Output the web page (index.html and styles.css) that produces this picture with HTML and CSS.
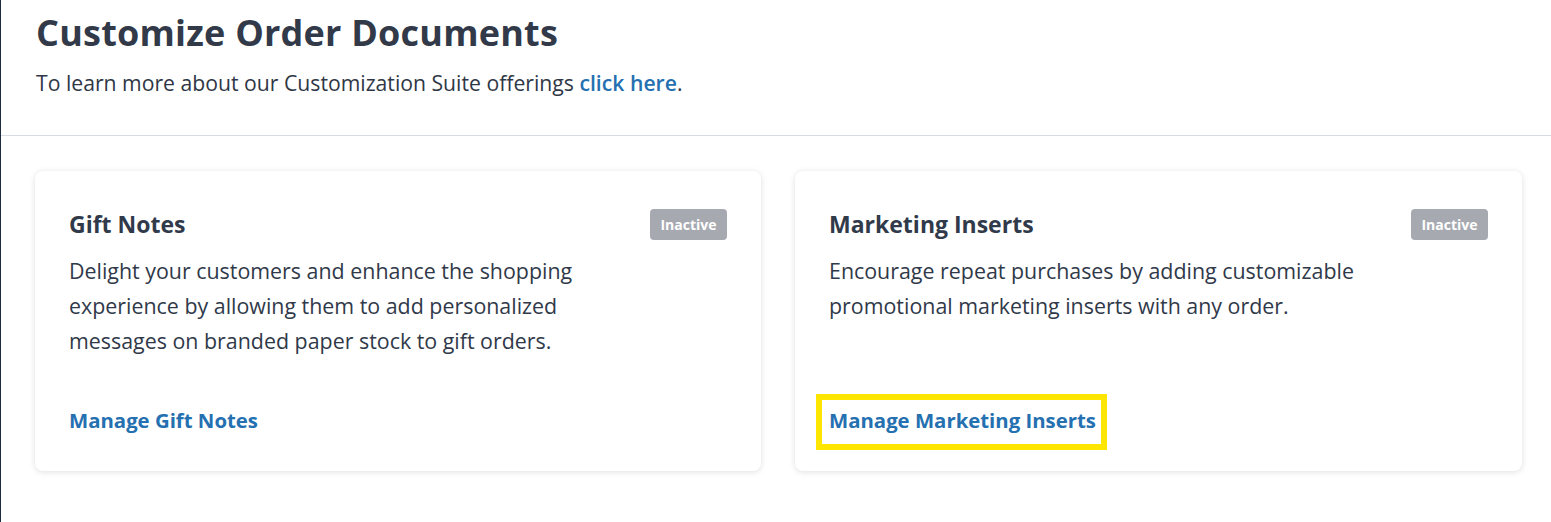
FILE: index.html
```html
<!DOCTYPE html>
<html lang="en">
<head>
<meta charset="utf-8">
<title>Customize Order Documents</title>
<link rel="stylesheet" href="styles.css">
</head>
<body>
<div class="page">
  <header class="page-header">
    <h1 class="page-title">Customize Order Documents</h1>
    <p class="page-intro">To learn more about our Customization Suite offerings <a class="text-link" href="#">click here</a>.</p>
  </header>
  <main class="cards">
    <section class="card">
      <div class="card-head">
        <h2 class="card-title">Gift Notes</h2>
        <span class="badge">Inactive</span>
      </div>
      <p class="card-desc">Delight your customers and enhance the shopping experience by allowing them to add personalized messages on branded paper stock to gift orders.</p>
      <a class="card-link" href="#">Manage Gift Notes</a>
    </section>
    <section class="card">
      <div class="card-head">
        <h2 class="card-title">Marketing Inserts</h2>
        <span class="badge">Inactive</span>
      </div>
      <p class="card-desc">Encourage repeat purchases by adding customizable promotional marketing inserts with any order.</p>
      <a class="card-link highlighted" href="#">Manage Marketing Inserts</a>
    </section>
  </main>
</div>
</body>
</html>
```

FILE: styles.css
```css
html, body {
  margin: 0;
  padding: 0;
  background: #ffffff;
}
body {
  font-family: "Open Sans", Lato, "Liberation Sans", sans-serif;
  color: #313a4a;
}
.page {
  min-height: 522px;
  border-left: 1px solid #1c2b3f;
  box-sizing: border-box;
}
.page-header {
  padding: 11px 35px 40px 35px;
  border-bottom: 1px solid #d6dbe4;
}
.page-title {
  margin: 0;
  font-size: 36px;
  line-height: 44px;
  font-weight: 700;
  letter-spacing: 0.22px;
  color: #323a49;
}
.page-intro {
  margin: 16px 0 0 0;
  font-size: 21.2px;
  line-height: 24px;
  color: #2f3746;
}
.text-link {
  color: #2470b0;
  text-decoration: none;
  font-weight: 600;
}
.cards {
  display: grid;
  grid-template-columns: 726px 727px;
  column-gap: 34px;
  padding: 35px 29px 0 34px;
}
.card {
  height: 300px;
  box-sizing: border-box;
  background: #fff;
  border-radius: 8px;
  box-shadow: 0 1px 6px rgba(0, 0, 0, 0.13);
  padding: 38px 34px 38px 34px;
  display: flex;
  flex-direction: column;
}
.card-head {
  display: flex;
  align-items: center;
  justify-content: space-between;
  height: 31px;
}
.card-title {
  margin: 0;
  font-size: 23px;
  line-height: 31px;
  font-weight: 700;
  color: #313a4a;
}
.badge {
  display: inline-flex;
  align-items: center;
  justify-content: center;
  width: 77px;
  height: 31px;
  box-sizing: border-box;
  border-radius: 4px;
  background: #a7a9b1;
  color: #fff;
  font-size: 14px;
  font-weight: 700;
}
.card-desc {
  margin: 13px 0 0 0;
  max-width: 560px;
  font-size: 21.4px;
  line-height: 35px;
  color: #303949;
}
.card-link {
  margin-top: auto;
  align-self: flex-start;
  font-size: 20.35px;
  line-height: 26px;
  font-weight: 700;
  color: #2470b0;
  text-decoration: none;
}
.highlighted {
  position: relative;
}
.highlighted::after {
  content: "";
  position: absolute;
  top: -13px;
  bottom: -17px;
  left: -13px;
  right: -11px;
  border: 6px solid #ffe600;
}
```
